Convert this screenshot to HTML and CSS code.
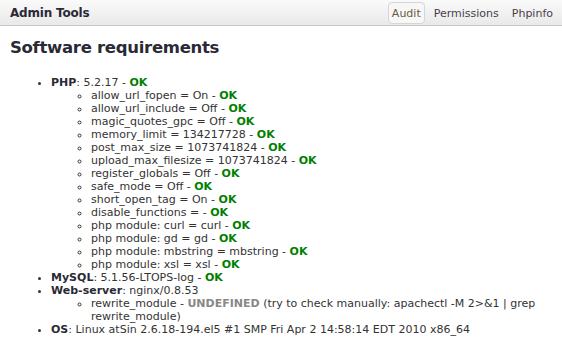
FILE: index.html
```html
<!DOCTYPE html>
<html>
<head>
<meta charset="utf-8">
<title>Admin Tools</title>
<link rel="stylesheet" href="styles.css">
</head>
<body>
<div class="topbar">
    <div class="title">Admin Tools</div>
    <ul class="tabs">
        <li class="active"><a href="#">Audit</a></li>
        <li><a href="#">Permissions</a></li>
        <li><a href="#">Phpinfo</a></li>
    </ul>
</div>
<div class="content">
    <h1>Software requirements</h1>
    <ul class="reqs">
        <li><b>PHP</b>: 5.2.17 - <span class="ok">OK</span>
            <ul>
                <li>allow_url_fopen = On - <span class="ok">OK</span></li>
                <li>allow_url_include = Off - <span class="ok">OK</span></li>
                <li>magic_quotes_gpc = Off - <span class="ok">OK</span></li>
                <li>memory_limit = 134217728 - <span class="ok">OK</span></li>
                <li>post_max_size = 1073741824 - <span class="ok">OK</span></li>
                <li>upload_max_filesize = 1073741824 - <span class="ok">OK</span></li>
                <li>register_globals = Off - <span class="ok">OK</span></li>
                <li>safe_mode = Off - <span class="ok">OK</span></li>
                <li>short_open_tag = On - <span class="ok">OK</span></li>
                <li>disable_functions = - <span class="ok">OK</span></li>
                <li>php module: curl = curl - <span class="ok">OK</span></li>
                <li>php module: gd = gd - <span class="ok">OK</span></li>
                <li>php module: mbstring = mbstring - <span class="ok">OK</span></li>
                <li>php module: xsl = xsl - <span class="ok">OK</span></li>
            </ul>
        </li>
        <li><b>MySQL</b>: 5.1.56-LTOPS-log - <span class="ok">OK</span></li>
        <li><b>Web-server</b>: nginx/0.8.53
            <ul>
                <li>rewrite_module - <span class="undef">UNDEFINED</span> (try to check manually: apachectl -M 2&gt;&amp;1 | grep rewrite_module)</li>
            </ul>
        </li>
        <li><b>OS</b>: Linux atSin 2.6.18-194.el5 #1 SMP Fri Apr 2 14:58:14 EDT 2010 x86_64</li>
    </ul>
</div>
</body>
</html>
```
FILE: styles.css
```css
body { margin: 0; background: #fff; color: #333; font: 11px "DejaVu Sans", Verdana, sans-serif; }
ul { margin: 0; }

.topbar { height: 25px; border-bottom: 1px solid #c8c8c8; background: linear-gradient(#fafafa, #e9e9e9); display: flex; align-items: center; justify-content: space-between; padding: 0 5px 0 10px; }
.title { font-weight: bold; font-size: 12px; color: #2a2a36; letter-spacing: -0.2px; }

.tabs { list-style: none; padding: 0; display: flex; height: 23px; margin-top: 1px; }
.tabs li { display: flex; align-items: center; margin-left: 5px; }
.tabs a { display: flex; align-items: center; height: 20px; padding: 0 3px; color: #4a3f4a; font-size: 11px; text-decoration: none; border: 1px solid transparent; border-radius: 4px; }
.tabs .active a { color: #6b5a3e; border-color: #d6d6d6; background: #f7f7f7; }

.content { padding: 0 10px; }
h1 { margin: 12px 0 19px; font-size: 16.5px; letter-spacing: -0.3px; color: #2a2a36; }

.reqs { padding-left: 41px; line-height: 13px; }
.reqs ul { padding-left: 40px; }
.reqs b { color: #2a2a36; }
.ok { font-weight: bold; color: #008000; }
.undef { font-weight: bold; color: #888; }
```
